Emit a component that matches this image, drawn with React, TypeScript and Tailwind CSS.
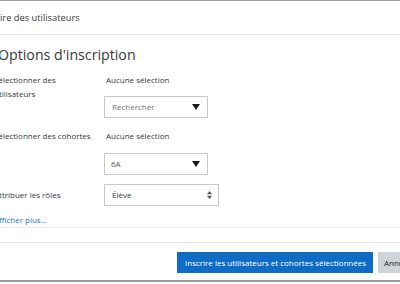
import React from 'react';

function CaretDown() {
  return (
    <svg width="8" height="6" viewBox="0 0 8 6" className="shrink-0">
      <path d="M0 0h8L4 6z" fill="#1a1a1a" />
    </svg>
  );
}

function UpDown() {
  return (
    <svg width="5" height="8" viewBox="0 0 5 8" className="shrink-0">
      <path d="M0 3.2h5L2.5 0z M0 4.8h5L2.5 8z" fill="#555" />
    </svg>
  );
}

export default function App() {
  return (
    <div className="w-[400px] h-[284px] overflow-hidden bg-white font-['Open_Sans',sans-serif] text-[#373a3c]">
      <div className="border-t border-[#9c9c9c]">
        {/* header */}
        <div className="h-[34px] flex items-center border-b border-[#e6e6e6]">
          <span className="ml-[-21px] text-[9.3px] text-[#3a3a3a] whitespace-nowrap">
            Inscrire des utilisateurs
          </span>
        </div>

        {/* body */}
        <div>
          <h3 className="mt-[10px] ml-[-2px] text-[14.2px] leading-[20px] whitespace-nowrap">
            Options d'inscription
          </h3>

          <div className="ml-[-6px] text-[8px] leading-[14px]">
            <div className="mt-[8px] grid grid-cols-[110px_1fr]">
              <div>
                Sélectionner des
                <br />
                utilisateurs
              </div>
              <div>
                <div className="pl-[2px]">Aucune sélection</div>
                <div className="mt-[9px] h-[22px] w-[104px] border border-[#c8c8c8] flex items-center justify-between pl-[7px] pr-[7px]">
                  <span className="text-[#757575]">Rechercher</span>
                  <CaretDown />
                </div>
              </div>
            </div>

            <div className="mt-[11px] grid grid-cols-[110px_1fr]">
              <div>Sélectionner des cohortes</div>
              <div>
                <div className="pl-[2px]">Aucune sélection</div>
                <div className="mt-[10px] h-[22px] w-[104px] border border-[#c8c8c8] flex items-center justify-between pl-[6px] pr-[7px]">
                  <span className="text-[#555]">6A</span>
                  <CaretDown />
                </div>
              </div>
            </div>

            <div className="mt-[9px] grid grid-cols-[110px_1fr] items-center">
              <div>Attribuer les rôles</div>
              <div className="h-[22px] w-[115px] border border-[#c8c8c8] flex items-center justify-between pl-[7px] pr-[6px]">
                <span>Élève</span>
                <UpDown />
              </div>
            </div>

            <a href="#" className="block mt-[7px] text-[#1b77cf]">
              Afficher plus...
            </a>
          </div>
          <div className="h-px bg-[#ececec]" />
        </div>

        {/* footer */}
        <div className="mt-[14px] border-t border-[#e3e3e3] pt-[9px]">
          <div className="flex gap-[5px] pl-[177px] text-[8px] whitespace-nowrap">
            <button className="shrink-0 h-[21px] w-[196px] bg-[#0f6cc5] text-white text-left pl-[8px]">
              Inscrire les utilisateurs et cohortes sélectionnées
            </button>
            <button className="shrink-0 h-[21px] bg-[#ced4da] text-[#222] pl-[6px] pr-[8px]">
              Annuler
            </button>
          </div>
          <div className="mt-[7px] h-[2px] bg-[#9a9a9a]" />
        </div>
      </div>
    </div>
  );
}
